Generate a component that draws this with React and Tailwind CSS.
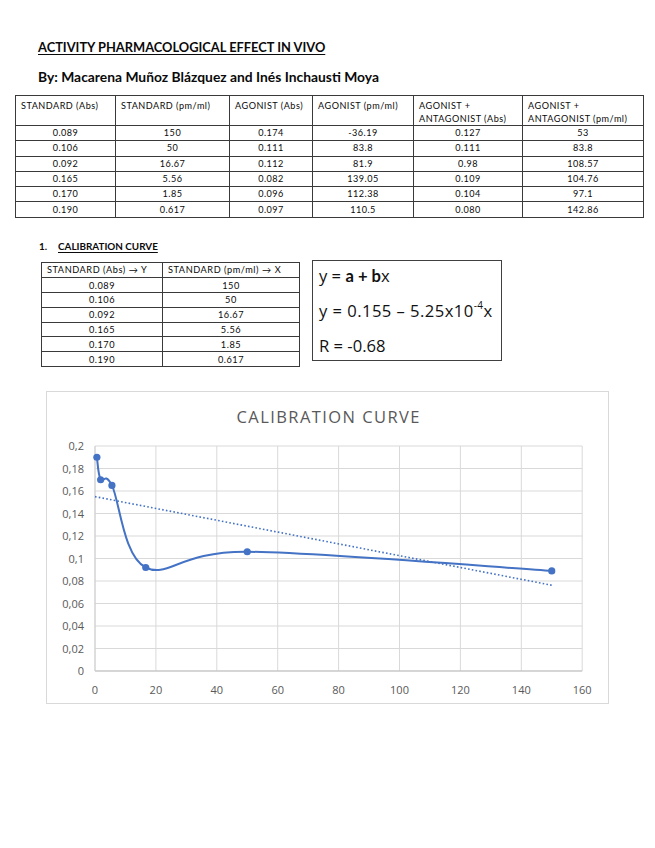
import React from "react";

const mainRows = [
  ["0.089", "150", "0.174", "-36.19", "0.127", "53"],
  ["0.106", "50", "0.111", "83.8", "0.111", "83.8"],
  ["0.092", "16.67", "0.112", "81.9", "0.98", "108.57"],
  ["0.165", "5.56", "0.082", "139.05", "0.109", "104.76"],
  ["0.170", "1.85", "0.096", "112.38", "0.104", "97.1"],
  ["0.190", "0.617", "0.097", "110.5", "0.080", "142.86"],
];

const calRows = [
  ["0.089", "150"],
  ["0.106", "50"],
  ["0.092", "16.67"],
  ["0.165", "5.56"],
  ["0.170", "1.85"],
  ["0.190", "0.617"],
];

const X0 = 48;
const XS = 3.045;
const Y0 = 279;
const YS = 1125;
const px = (x) => X0 + x * XS;
const py = (y) => Y0 - y * YS;

function smoothPath(pts) {
  const p = pts.map(([x, y]) => [px(x), py(y)]);
  let d = `M${p[0][0].toFixed(2)},${p[0][1].toFixed(2)}`;
  for (let i = 0; i < p.length - 1; i++) {
    const p0 = p[i - 1] || p[i];
    const p1 = p[i];
    const p2 = p[i + 1];
    const p3 = p[i + 2] || p[i + 1];
    const c1 = [p1[0] + (p2[0] - p0[0]) / 6, p1[1] + (p2[1] - p0[1]) / 6];
    const c2 = [p2[0] - (p3[0] - p1[0]) / 6, p2[1] - (p3[1] - p1[1]) / 6];
    d += ` C${c1[0].toFixed(2)},${c1[1].toFixed(2)} ${c2[0].toFixed(2)},${c2[1].toFixed(2)} ${p2[0].toFixed(2)},${p2[1].toFixed(2)}`;
  }
  return d;
}

function Chart() {
  const data = [
    [0.617, 0.19],
    [1.85, 0.17],
    [5.56, 0.165],
    [16.67, 0.092],
    [50, 0.106],
    [150, 0.089],
  ];
  const xTicks = [0, 20, 40, 60, 80, 100, 120, 140, 160];
  const yTicks = [0, 0.02, 0.04, 0.06, 0.08, 0.1, 0.12, 0.14, 0.16, 0.18, 0.2];
  const yLabel = (v) => (v === 0 ? "0" : String(Number(v.toFixed(2))).replace(".", ","));
  return (
    <svg width="563" height="313" viewBox="0 0 563 313" className="block">
      <text
        x="281"
        y="30.5"
        textAnchor="middle"
        fontFamily="'Open Sans', sans-serif"
        fontSize="16.5"
        fill="#595959"
        textLength="183"
        lengthAdjust="spacing"
      >
        CALIBRATION CURVE
      </text>
      {yTicks.map((v) => (
        <line key={"h" + v} x1={px(0)} x2={px(160)} y1={py(v)} y2={py(v)} stroke="#d9d9d9" strokeWidth="1" />
      ))}
      {xTicks.map((v) => (
        <line key={"v" + v} x1={px(v)} x2={px(v)} y1={py(0.2)} y2={py(0)} stroke="#d9d9d9" strokeWidth="1" />
      ))}
      <line x1={px(0)} x2={px(160)} y1={py(0)} y2={py(0)} stroke="#bfbfbf" strokeWidth="1" />
      <line x1={px(0)} x2={px(0)} y1={py(0.2)} y2={py(0)} stroke="#d0d0d0" strokeWidth="1" />
      {yTicks.map((v) => (
        <text
          key={"yl" + v}
          x="37"
          y={py(v) + 4}
          textAnchor="end"
          fontFamily="'Open Sans', sans-serif"
          fontSize="11"
          fill="#595959"
        >
          {yLabel(v)}
        </text>
      ))}
      {xTicks.map((v) => (
        <text
          key={"xl" + v}
          x={px(v)}
          y="302"
          textAnchor="middle"
          fontFamily="'Open Sans', sans-serif"
          fontSize="11"
          fill="#595959"
        >
          {v}
        </text>
      ))}
      <line
        x1={px(0)}
        y1={py(0.155)}
        x2={px(150)}
        y2={py(0.155 - 0.000525 * 150)}
        stroke="#4472c4"
        strokeWidth="1.6"
        strokeDasharray="1.6 2.2"
      />
      <path d={smoothPath(data)} fill="none" stroke="#4472c4" strokeWidth="2" strokeLinejoin="round" />
      {data.map(([x, y]) => (
        <circle key={"m" + x} cx={px(x)} cy={py(y)} r="3.6" fill="#4472c4" />
      ))}
    </svg>
  );
}

export default function App() {
  const cell = "border border-[#3a3a3a] text-center align-middle p-0 h-[15.3px] leading-[14px]";
  const hcell = "border border-[#3a3a3a] text-left align-top px-[5px] pt-[3px] pb-0 font-normal leading-[13px]";
  const scell = "border border-[#3a3a3a] text-left align-middle px-[5px] py-0 font-normal leading-[13px]";
  return (
    <div className="w-[655px] min-h-[848px] bg-white font-['Lato',sans-serif] text-[#0a0a0a]">
      <div className="pt-[39px] pl-[38px]">
        <h1 className="text-[12.85px] font-bold underline leading-[16px] underline-offset-[2px]">
          ACTIVITY PHARMACOLOGICAL EFFECT IN VIVO
        </h1>
        <h2 className="mt-[13px] text-[13.85px] font-bold leading-[17px]">
          By: Macarena Muñoz Blázquez and Inés Inchausti Moya
        </h2>
      </div>

      <div className="pl-[15px] mt-[10px]">
        <table className="table-fixed border-collapse w-[628px] text-[9.1px] tracking-[0.5px]">
          <colgroup>
            <col className="w-[100px]" />
            <col className="w-[114px]" />
            <col className="w-[83px]" />
            <col className="w-[101px]" />
            <col className="w-[109px]" />
            <col className="w-[121px]" />
          </colgroup>
          <thead>
            <tr className="h-[28px]">
              <th className={hcell}>STANDARD (Abs)</th>
              <th className={hcell}>STANDARD (pm/ml)</th>
              <th className={hcell}>AGONIST (Abs)</th>
              <th className={hcell}>AGONIST (pm/ml)</th>
              <th className={hcell}>
                AGONIST +<br />
                ANTAGONIST (Abs)
              </th>
              <th className={hcell}>
                AGONIST +<br />
                ANTAGONIST (pm/ml)
              </th>
            </tr>
          </thead>
          <tbody>
            {mainRows.map((r, i) => (
              <tr key={i} className="h-[15.3px]">
                {r.map((c, j) => (
                  <td key={j} className={cell}>
                    {c}
                  </td>
                ))}
              </tr>
            ))}
          </tbody>
        </table>
      </div>

      <div className="mt-[22px] pl-[39px] flex items-baseline text-[9.9px] font-bold leading-[12px]">
        <span className="w-[19px]">1.</span>
        <span className="underline underline-offset-[2px]">CALIBRATION CURVE</span>
      </div>

      <div className="mt-[8px] flex items-start">
        <div className="ml-[41px] mt-[2px]">
          <table className="table-fixed border-collapse w-[258px] text-[9.2px] tracking-[0.55px]">
            <colgroup>
              <col className="w-[121px]" />
              <col className="w-[137px]" />
            </colgroup>
            <thead>
              <tr className="h-[15.4px]">
                <th className={scell}>STANDARD (Abs) → Y</th>
                <th className={scell}>STANDARD (pm/ml) → X</th>
              </tr>
            </thead>
            <tbody>
              {calRows.map((r, i) => (
                <tr key={i} className="h-[14.8px]">
                  {r.map((c, j) => (
                    <td key={j} className="border border-[#3a3a3a] text-center align-middle p-0 leading-[13px]">
                      {c}
                    </td>
                  ))}
                </tr>
              ))}
            </tbody>
          </table>
        </div>
        <div className="ml-[12px] w-[190px] h-[101px] border-[1.5px] border-[#404040] pl-[6px] pt-[5px] flex flex-col gap-[15px] text-[16.6px] leading-[20px] font-['Open_Sans',sans-serif] text-[#111]">
          <div>
            y = <span className="font-bold font-['Lato',sans-serif]">a + b</span>x
          </div>
          <div className="tracking-[0.45px] whitespace-nowrap">
            y = 0.155 – 5.25x10<sup className="text-[10px] -top-[0.75em]">-4</sup>x
          </div>
          <div>R = -0.68</div>
        </div>
      </div>

      <div className="mt-[24px] ml-[46px] w-[563px] h-[313px] border border-[#d9d9d9] box-border">
        <Chart />
      </div>
    </div>
  );
}
